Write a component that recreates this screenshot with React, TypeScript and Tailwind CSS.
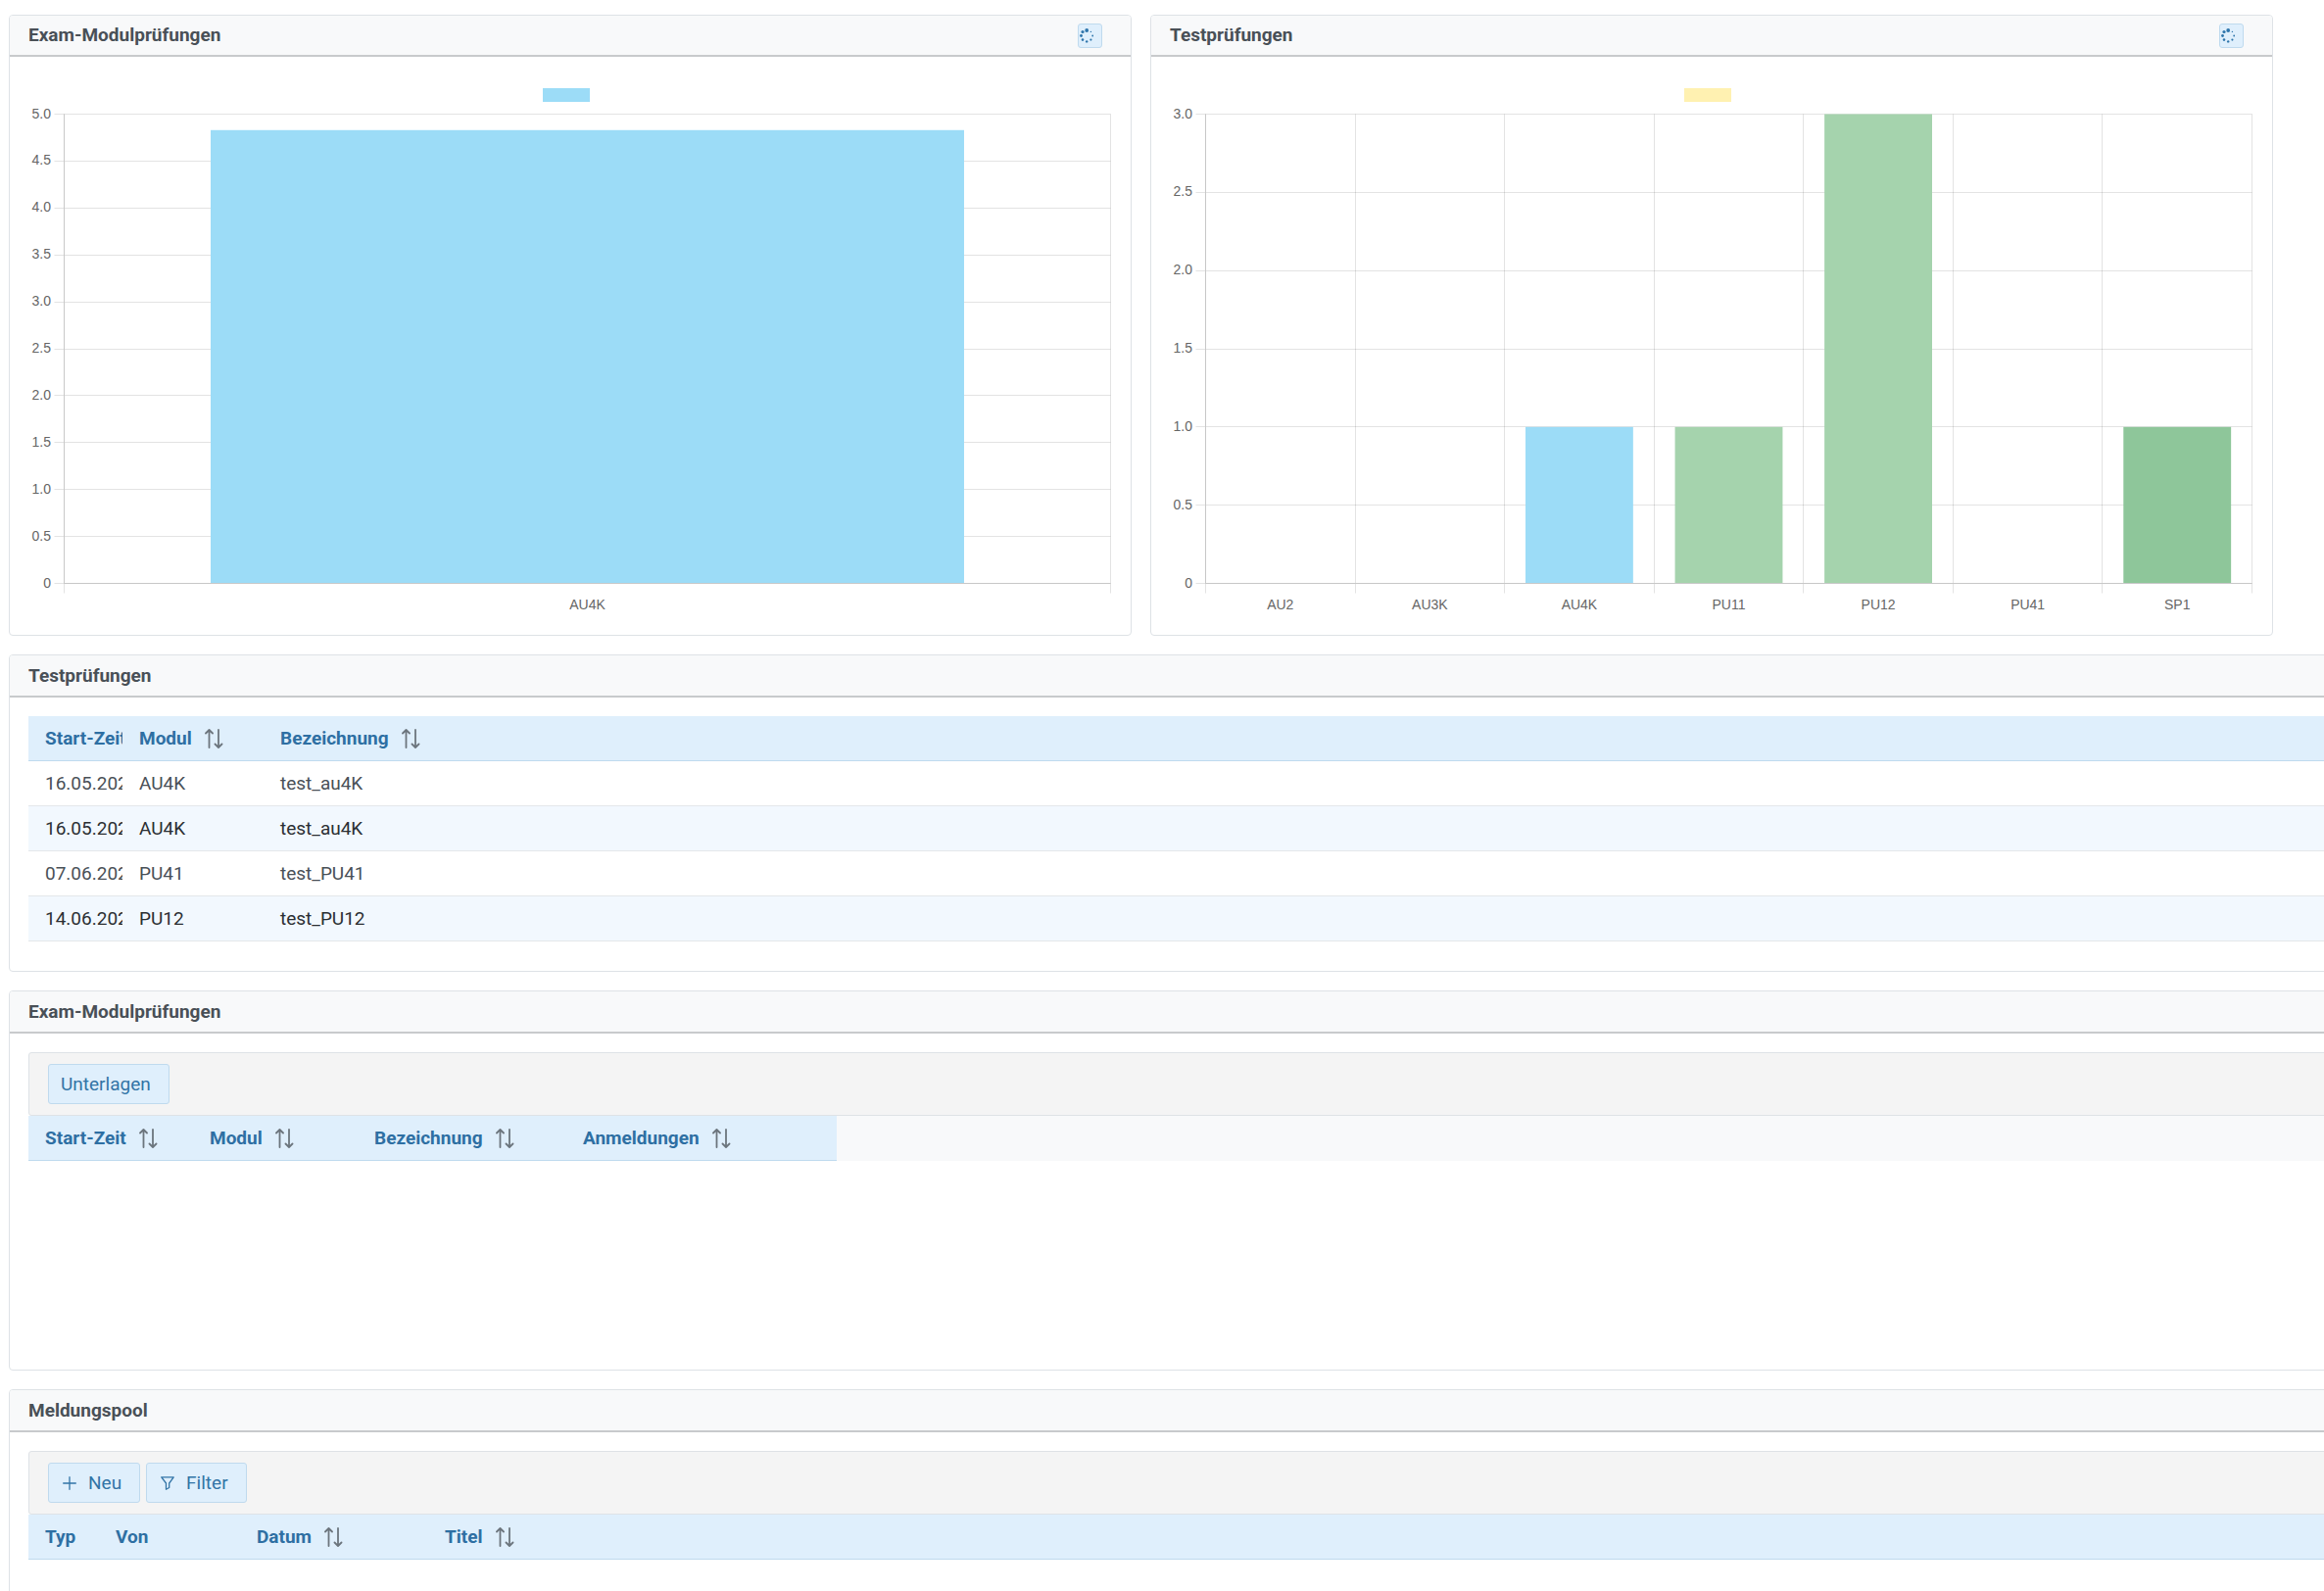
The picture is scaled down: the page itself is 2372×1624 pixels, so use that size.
import type { ReactNode } from "react";

type Bar = { label: string; value: number; color: string };

type Column = { label: string; width?: string; sortable?: boolean };

const EXAM_BARS: Bar[] = [{ label: "AU4K", value: 4.83, color: "#9cdcf7" }];

const TEST_BARS: Bar[] = [
  { label: "AU2", value: 0, color: "#fff1a8" },
  { label: "AU3K", value: 0, color: "#fff1a8" },
  { label: "AU4K", value: 1, color: "#9cdcf7" },
  { label: "PU11", value: 1, color: "#a5d3ad" },
  { label: "PU12", value: 3, color: "#a5d3ad" },
  { label: "PU41", value: 0, color: "#a5d3ad" },
  { label: "SP1", value: 1, color: "#8ec69a" },
];

const TEST_COLUMNS: Column[] = [
  { label: "Start-Zeit", width: "w-24", sortable: true },
  { label: "Modul", width: "w-36", sortable: true },
  { label: "Bezeichnung", sortable: true },
];

const TEST_ROWS = [
  ["16.05.2023", "AU4K", "test_au4K"],
  ["16.05.2023", "AU4K", "test_au4K"],
  ["07.06.2023", "PU41", "test_PU41"],
  ["14.06.2023", "PU12", "test_PU12"],
];

const EXAM_COLUMNS: Column[] = [
  { label: "Start-Zeit", width: "w-[168px]", sortable: true },
  { label: "Modul", width: "w-[168px]", sortable: true },
  { label: "Bezeichnung", width: "w-[213px]", sortable: true },
  { label: "Anmeldungen", width: "w-[276px]", sortable: true },
];

const MESSAGE_COLUMNS: Column[] = [
  { label: "Typ", width: "w-[72px]" },
  { label: "Von", width: "w-36" },
  { label: "Datum", width: "w-48", sortable: true },
  { label: "Titel", sortable: true },
];

const SortIcon = () => (
  <svg viewBox="0 0 20 20" className="w-5 h-5 shrink-0 text-[#6c757d]" fill="none" stroke="currentColor" strokeWidth="1.8" strokeLinecap="round" strokeLinejoin="round" aria-hidden="true">
    <path d="M5.500 19V1.500M2 4.500l3.500-3.500L9 4.500" />
    <path d="M15 1v17.500M11.500 15.500 15 19l3.500-3.500" />
  </svg>
);

const SPINNER_DOTS = [
  [7.2, 2, 1.9],
  [3, 3.5, 1.6],
  [1.5, 7.5, 1.4],
  [3, 11.6, 1.3],
  [7.2, 13.4, 1.2],
  [11.4, 11.6, 1.1],
  [13.2, 7.5, 0.9],
  [11.4, 3.4, 0.7],
];

const SpinnerIcon = () => (
  <svg viewBox="0 0 15 15" className="w-[15px] h-[15px]" fill="currentColor" aria-hidden="true">
    {SPINNER_DOTS.map(([cx, cy, r]) => (
      <circle key={`${cx}-${cy}`} cx={cx} cy={cy} r={r} />
    ))}
  </svg>
);

const PlusIcon = () => (
  <svg viewBox="0 0 14 14" className="w-3.5 h-3.5" fill="none" stroke="currentColor" strokeWidth="1.3" strokeLinecap="round" aria-hidden="true">
    <path d="M7 .7v12.600M.7 7h12.600" />
  </svg>
);

const FilterIcon = () => (
  <svg viewBox="0 0 14 14" className="w-3.5 h-3.5" fill="none" stroke="currentColor" strokeWidth="1.3" strokeLinejoin="round" aria-hidden="true">
    <path d="M.8.8h12.400L8.700 7v4.500L5.500 13.300V7z" />
  </svg>
);

const Panel = ({ title, action, children }: { title: string; action?: ReactNode; children: ReactNode }) => (
  <section className="border border-[#dee2e6] rounded-[4px] overflow-hidden">
    <header className={`flex items-center justify-between px-[19px] bg-[#f8f9fa] border-b-2 border-[#c8cacc] ${action ? "h-[42px]" : "h-[43px]"}`}>
      <h2 className="text-[19px] leading-6 font-bold">{title}</h2>
      {action}
    </header>
    {children}
  </section>
);

const LoadingButton = ({ label }: { label: string }) => (
  <button type="button" aria-label={label} className="flex items-center w-[25px] h-[25px] pl-px mr-2.5 rounded-[3px] border border-[#bfdaee] bg-[#dfeffc] text-[#2e75ab]">
    <SpinnerIcon />
  </button>
);

const ToolbarButton = ({ icon, className, children }: { icon?: ReactNode; className: string; children: ReactNode }) => (
  <button type="button" className={`flex items-center h-[41px] rounded-[3px] border border-[#bfdaee] bg-[#dfeffc] text-[19px] leading-6 text-[#3274a6] ${className}`}>
    {icon}
    {children}
  </button>
);

const Toolbar = ({ children }: { children: ReactNode }) => (
  <div className="flex items-center gap-1.5 h-[65px] px-[19px] rounded-[3px] border border-[#dee2e6] bg-[#f4f4f4]">{children}</div>
);

// Plot area inside the 1106 x 550 chart
const PLOT = { left: 36.5, right: 1104.5, top: 37.5, bottom: 516.5 };

const BarChart = ({ bars, max, legendColor, title }: { bars: Bar[]; max: number; legendColor: string; title: string }) => {
  const step = (PLOT.right - PLOT.left) / bars.length;
  const toY = (value: number) => PLOT.bottom - (value / max) * (PLOT.bottom - PLOT.top);
  const ticks = Array.from({ length: max * 2 + 1 }, (_, i) => i / 2);

  return (
    <svg viewBox="0 0 1106 550" className="block w-full" role="img" aria-label={title}>
      <rect x="525" y="11" width="48" height="14" fill={legendColor} />
      <g stroke="#000000" strokeOpacity="0.11">
        {ticks.map((tick) => (
          <line key={tick} x1={PLOT.left - 10} x2={PLOT.right} y1={Math.floor(toY(tick)) + 0.5} y2={Math.floor(toY(tick)) + 0.5} />
        ))}
        {[...bars, null].map((_, i) => (
          <line key={i} x1={Math.floor(PLOT.left + i * step) + 0.5} x2={Math.floor(PLOT.left + i * step) + 0.5} y1={PLOT.top} y2={PLOT.bottom + 10} />
        ))}
      </g>
      {bars.map((bar, i) => (
        <rect key={bar.label} x={PLOT.left + (i + 0.14) * step} y={toY(bar.value)} width={step * 0.72} height={PLOT.bottom - toY(bar.value)} fill={bar.color} />
      ))}
      <path d={`M${PLOT.left} ${PLOT.top}V${PLOT.bottom}H${PLOT.right}`} fill="none" stroke="#c8c8c8" />
      <g fill="#666666" fontSize="14" fontFamily="'Liberation Sans', Arial, sans-serif">
        {ticks.map((tick) => (
          <text key={tick} x="23" y={toY(tick) + 4} textAnchor="end">
            {tick === 0 ? "0" : tick.toFixed(1)}
          </text>
        ))}
        {bars.map((bar, i) => (
          <text key={bar.label} x={PLOT.left + (i + 0.5) * step} y={PLOT.bottom + 26} textAnchor="middle">
            {bar.label}
          </text>
        ))}
      </g>
    </svg>
  );
};

const DataTable = ({ columns, rows = [], className = "w-full" }: { columns: Column[]; rows?: string[][]; className?: string }) => (
  <table className={`table-fixed border-separate border-spacing-0 text-[19px] leading-6 ${className}`}>
    <thead>
      <tr>
        {columns.map((col) => (
          <th key={col.label} scope="col" className={`h-[46px] pl-[17px] pr-0 overflow-hidden text-left font-bold whitespace-nowrap bg-[#dfeffc] text-[#2e6fa3] border-b border-[#bfdaee] ${col.width ?? ""}`}>
            <span className="flex items-center gap-3">
              {col.label}
              {col.sortable && <SortIcon />}
            </span>
          </th>
        ))}
      </tr>
    </thead>
    <tbody>
      {rows.map((row, i) => (
        <tr key={i} className="even:bg-[#f2f8fe] even:text-[#2b2f33]">
          {row.map((cell, j) => (
            <td key={j} className="h-[46px] pl-[17px] overflow-hidden whitespace-nowrap border-b border-[#e4e7ea]">
              {cell}
            </td>
          ))}
        </tr>
      ))}
    </tbody>
  </table>
);

export default function App() {
  return (
    <main className="h-screen overflow-hidden bg-white pt-[15px] pl-[9px] font-['Roboto',sans-serif] text-[#495057]">
      <div className="grid grid-cols-2 gap-[19px] pr-[52px] mb-[19px]">
        <Panel title="Exam-Modulprüfungen" action={<LoadingButton label="Exam-Modulprüfungen aktualisieren" />}>
          <div className="px-[19px] pt-[21px] pb-[19px]">
            <BarChart bars={EXAM_BARS} max={5} legendColor="#9cdcf7" title="Exam-Modulprüfungen" />
          </div>
        </Panel>
        <Panel title="Testprüfungen" action={<LoadingButton label="Testprüfungen aktualisieren" />}>
          <div className="px-[19px] pt-[21px] pb-[19px]">
            <BarChart bars={TEST_BARS} max={3} legendColor="#fff1b1" title="Testprüfungen" />
          </div>
        </Panel>
      </div>

      {/* Full-width panels run on past the right edge of the window */}
      <div className="flex flex-col gap-[19px] -mr-10">
        <Panel title="Testprüfungen">
          <div className="px-[19px] pt-[19px] pb-[30px]">
            <DataTable columns={TEST_COLUMNS} rows={TEST_ROWS} />
          </div>
        </Panel>

        <Panel title="Exam-Modulprüfungen">
          <div className="px-[19px] pt-[19px] min-h-[343px]">
            <Toolbar>
              <ToolbarButton className="pl-3 pr-[18px]">Unterlagen</ToolbarButton>
            </Toolbar>
            <div className="bg-[#f8f9fa]">
              <DataTable columns={EXAM_COLUMNS} className="w-[825px]" />
            </div>
          </div>
        </Panel>

        <Panel title="Meldungspool">
          <div className="px-[19px] pt-[19px] min-h-[343px]">
            <Toolbar>
              <ToolbarButton icon={<PlusIcon />} className="gap-3 pl-3.5 pr-[18px]">Neu</ToolbarButton>
              <ToolbarButton icon={<FilterIcon />} className="gap-3 pl-3.5 pr-[18px]">Filter</ToolbarButton>
            </Toolbar>
            <DataTable columns={MESSAGE_COLUMNS} />
          </div>
        </Panel>
      </div>
    </main>
  );
}
